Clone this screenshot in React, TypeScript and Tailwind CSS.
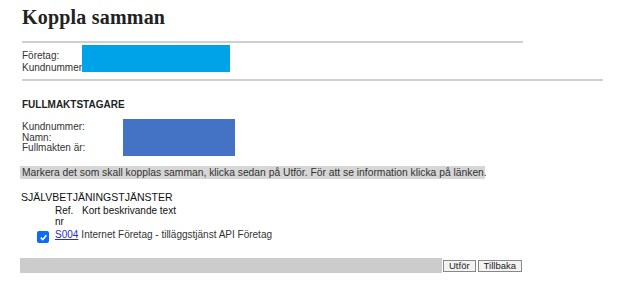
import React from "react";

const sans = { fontFamily: '"Liberation Sans", Arial, sans-serif' };

export default function App() {
  return (
    <div className="w-[624px] h-[287px] bg-white text-[#333] overflow-hidden" style={sans}>
      <div className="pl-[22px] pt-[4px]">
        <h1 className="text-[20px] font-bold text-[#222] leading-[26px] tracking-[0.2px]" style={{ fontFamily: '"Liberation Serif", "Times New Roman", serif' }}>
          Koppla samman
        </h1>
      </div>

      <div className="ml-[22px] mt-[11px] w-[501px] h-[2px] bg-[#cfcfcf]" />

      <div className="ml-[22px] mt-[2px] flex text-[10px] leading-[12px]">
        <div className="pt-[5px]">
          <div>Företag:</div>
          <div>Kundnummer</div>
        </div>
        <div className="w-[148px] h-[27px] bg-[#00a2e8]" />
      </div>

      <div className="ml-[22px] mt-[5px] w-[581px] h-[2px] bg-[#cfcfcf]" />

      <div className="ml-[22px] mt-[18px] text-[10px] font-bold text-[#222] leading-[12px]">FULLMAKTSTAGARE</div>

      <div className="ml-[22px] mt-[8px] flex text-[10px] leading-[10.5px]">
        <div className="w-[101px] pt-[3px]">
          <div>Kundnummer:</div>
          <div>Namn:</div>
          <div>Fullmakten är:</div>
        </div>
        <div className="w-[112px] h-[37px] bg-[#4472c4]" />
      </div>
      <div className="ml-[21px] h-[10px] text-[6px] leading-[6px] text-[#999]">.</div>

      <div className="ml-[20px] w-[465px] h-[13px] bg-[#d6d6d6] pl-[2px] text-[10.3px] leading-[13px] text-[#333] whitespace-nowrap">
        Markera det som skall kopplas samman, klicka sedan på Utför. För att se information klicka på länken.
      </div>

      <div className="ml-[21px] mt-[12px] text-[10.5px] leading-[12px] text-[#111]">SJÄLVBETJÄNINGSTJÄNSTER</div>
      <div className="ml-[55px] mt-[2px] text-[10px] leading-[11px] text-[#111]">
        <div className="flex">
          <span className="w-[27px]">Ref.</span>
          <span>Kort beskrivande text</span>
        </div>
        <div>nr</div>
      </div>
      <div className="ml-[37px] mt-[2px] flex items-start text-[10px] leading-[11px] text-[#333]">
        <div className="mt-[2px] w-[12px] h-[12px] rounded-[2px] bg-[#0b6cf5] flex items-center justify-center">
          <svg width="9" height="9" viewBox="0 0 10 10">
            <path d="M2 5.2 L4.2 7.4 L8.2 2.6" stroke="white" strokeWidth="1.8" fill="none" />
          </svg>
        </div>
        <a className="ml-[6px] text-[#2a2ad0] underline">S004</a>
        <span className="ml-[3px]">Internet Företag - tilläggstjänst API Företag</span>
      </div>

      <div className="ml-[20px] mt-[15px] flex items-center">
        <div className="w-[422px] h-[15px] bg-[#cccccc]" />
        <button className="ml-[1px] h-[12px] px-[5px] border border-[#888] bg-[#f3f3f3] text-[9.5px] leading-[10px] text-[#222]">Utför</button>
        <button className="ml-[2px] h-[12px] px-[5px] border border-[#888] bg-[#f3f3f3] text-[9.5px] leading-[10px] text-[#222]">Tillbaka</button>
      </div>
    </div>
  );
}
